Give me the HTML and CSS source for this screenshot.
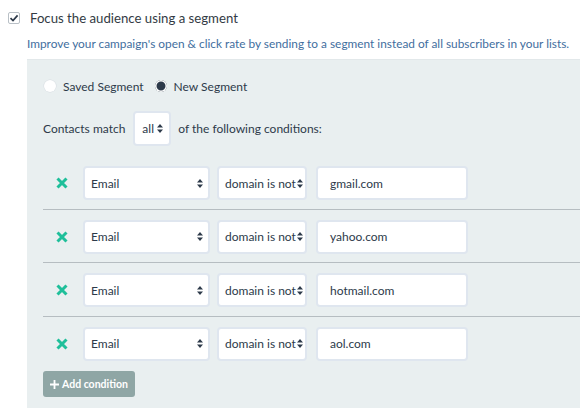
FILE: index.html
```html
<!DOCTYPE html>
<html>
<head>
<meta charset="utf-8">
<link rel="stylesheet" href="styles.css">
</head>
<body>
<div class="head">
  <span class="check"><svg width="10" height="10" viewBox="0 0 10 10"><path d="M1.5 5.2 L4 7.6 L8.6 2.4" fill="none" stroke="#2d3a4a" stroke-width="1.7"/></svg></span>
  <span class="title">Focus the audience using a segment</span>
</div>
<div class="hint">Improve your campaign's open &amp; click rate by sending to a segment instead of all subscribers in your lists.</div>
<div class="panel">
  <div class="radios">
    <span class="radio"></span><span class="rlabel">Saved Segment</span>
    <span class="radio on"></span><span class="rlabel">New Segment</span>
  </div>
  <div class="match">
    <span>Contacts match</span>
    <span class="sel sel-all">all<svg class="arr" width="6" height="9" viewBox="0 0 6 9"><path d="M3 0 L6 3.5 H0 Z M3 9 L6 5.5 H0 Z" fill="#2d3a4a"/></svg></span>
    <span>of the following conditions:</span>
  </div>
  <div class="rows">
    <div class="row">
      <svg class="x" width="12" height="12" viewBox="0 0 12 12"><path d="M1.5 1.5 L10.5 10.5 M10.5 1.5 L1.5 10.5" stroke="#1fbf9a" stroke-width="3"/></svg>
      <span class="sel sel-field">Email<svg class="arr" width="6" height="9" viewBox="0 0 6 9"><path d="M3 0 L6 3.5 H0 Z M3 9 L6 5.5 H0 Z" fill="#2d3a4a"/></svg></span>
      <span class="sel sel-op">domain is not<svg class="arr" width="6" height="9" viewBox="0 0 6 9"><path d="M3 0 L6 3.5 H0 Z M3 9 L6 5.5 H0 Z" fill="#2d3a4a"/></svg></span>
      <span class="inp">gmail.com</span>
    </div>
    <div class="row">
      <svg class="x" width="12" height="12" viewBox="0 0 12 12"><path d="M1.5 1.5 L10.5 10.5 M10.5 1.5 L1.5 10.5" stroke="#1fbf9a" stroke-width="3"/></svg>
      <span class="sel sel-field">Email<svg class="arr" width="6" height="9" viewBox="0 0 6 9"><path d="M3 0 L6 3.5 H0 Z M3 9 L6 5.5 H0 Z" fill="#2d3a4a"/></svg></span>
      <span class="sel sel-op">domain is not<svg class="arr" width="6" height="9" viewBox="0 0 6 9"><path d="M3 0 L6 3.5 H0 Z M3 9 L6 5.5 H0 Z" fill="#2d3a4a"/></svg></span>
      <span class="inp">yahoo.com</span>
    </div>
    <div class="row">
      <svg class="x" width="12" height="12" viewBox="0 0 12 12"><path d="M1.5 1.5 L10.5 10.5 M10.5 1.5 L1.5 10.5" stroke="#1fbf9a" stroke-width="3"/></svg>
      <span class="sel sel-field">Email<svg class="arr" width="6" height="9" viewBox="0 0 6 9"><path d="M3 0 L6 3.5 H0 Z M3 9 L6 5.5 H0 Z" fill="#2d3a4a"/></svg></span>
      <span class="sel sel-op">domain is not<svg class="arr" width="6" height="9" viewBox="0 0 6 9"><path d="M3 0 L6 3.5 H0 Z M3 9 L6 5.5 H0 Z" fill="#2d3a4a"/></svg></span>
      <span class="inp">hotmail.com</span>
    </div>
    <div class="row last">
      <svg class="x" width="12" height="12" viewBox="0 0 12 12"><path d="M1.5 1.5 L10.5 10.5 M10.5 1.5 L1.5 10.5" stroke="#1fbf9a" stroke-width="3"/></svg>
      <span class="sel sel-field">Email<svg class="arr" width="6" height="9" viewBox="0 0 6 9"><path d="M3 0 L6 3.5 H0 Z M3 9 L6 5.5 H0 Z" fill="#2d3a4a"/></svg></span>
      <span class="sel sel-op">domain is not<svg class="arr" width="6" height="9" viewBox="0 0 6 9"><path d="M3 0 L6 3.5 H0 Z M3 9 L6 5.5 H0 Z" fill="#2d3a4a"/></svg></span>
      <span class="inp">aol.com</span>
    </div>
  </div>
  <div class="btn"><svg width="9" height="9" viewBox="0 0 9 9"><path d="M4.5 0 V9 M0 4.5 H9" stroke="#fff" stroke-width="1.8"/></svg>Add condition</div>
</div>
</body>
</html>
```
FILE: styles.css
```css
* { box-sizing: border-box; }
html, body { margin: 0; padding: 0; background: #fff; }
body {
  width: 580px;
  height: 408px;
  overflow: hidden;
  font-family: Lato, "Open Sans", sans-serif;
  color: #2d3a4a;
}
.head {
  display: flex;
  align-items: center;
  height: 12px;
  margin: 12px 0 0 8px;
}
.check {
  width: 12px;
  height: 12px;
  border: 1px solid #b9c0c6;
  border-radius: 2px;
  display: flex;
  align-items: center;
  justify-content: center;
  background: #fff;
}
.title {
  margin-left: 10px;
  font-size: 13.2px;
  color: #333b44;
}
.hint {
  margin: 13px 0 0 27px;
  font-size: 11.85px;
  line-height: 14px;
  color: #3f6e9e;
  white-space: nowrap;
}
.panel {
  margin: 8px 0 0 27px;
  background: #e9eff0;
  border-top: 1px solid #e2e8ea;
  padding: 20px 0 0 16px;
  height: 360px;
}
.radios {
  display: flex;
  align-items: center;
  height: 12px;
  margin-left: 1px;
  font-size: 12px;
}
.radio {
  width: 12px;
  height: 12px;
  border-radius: 50%;
  background: #fff;
  box-shadow: 0 0 0 0.5px #d7dde2;
}
.radio.on { background: #2d3a4a; box-shadow: 0 0 0 1.5px #fff inset; }
.rlabel { margin: 0 11px 0 7px; }
.match {
  display: flex;
  align-items: center;
  gap: 7px;
  margin-top: 19px;
  font-size: 12px;
}
.match span:first-child { margin-right: 1px; }
.sel {
  display: flex;
  align-items: center;
  justify-content: space-between;
  background: #fff;
  border: 2px solid #dfe6ef;
  border-radius: 4px;
  font-size: 12px;
  color: #2d3a4a;
  height: 34px;
}
.sel-all {
  width: 38px;
  height: 35px;
  padding: 0 6px 0 7px;
}
.rows { margin-top: 10px; }
.row {
  display: flex;
  align-items: center;
  padding: 10px 0 8.5px 0;
  border-bottom: 1px solid #b6bdc1;
}
.row.last { border-bottom: none; }
.x { margin: 0 15px 0 13px; }
.sel-field { width: 127px; padding: 0 5px 0 6px; }
.sel-op { width: 90px; margin-left: 7px; padding: 0 2px 0 6px; }
.inp {
  display: flex;
  align-items: center;
  width: 152px;
  height: 34px;
  margin-left: 9px;
  padding-left: 12px;
  background: #fff;
  border: 2px solid #dfe6ef;
  border-radius: 4px;
  font-size: 12px;
  color: #2d3a4a;
}
.btn {
  display: inline-flex;
  align-items: center;
  gap: 3px;
  margin-top: 2px;
  height: 26px;
  padding: 0 7px;
  background: #8fa6a5;
  border-radius: 3px;
  color: #fff;
  font-size: 10.5px;
  font-weight: 700;
}
```
